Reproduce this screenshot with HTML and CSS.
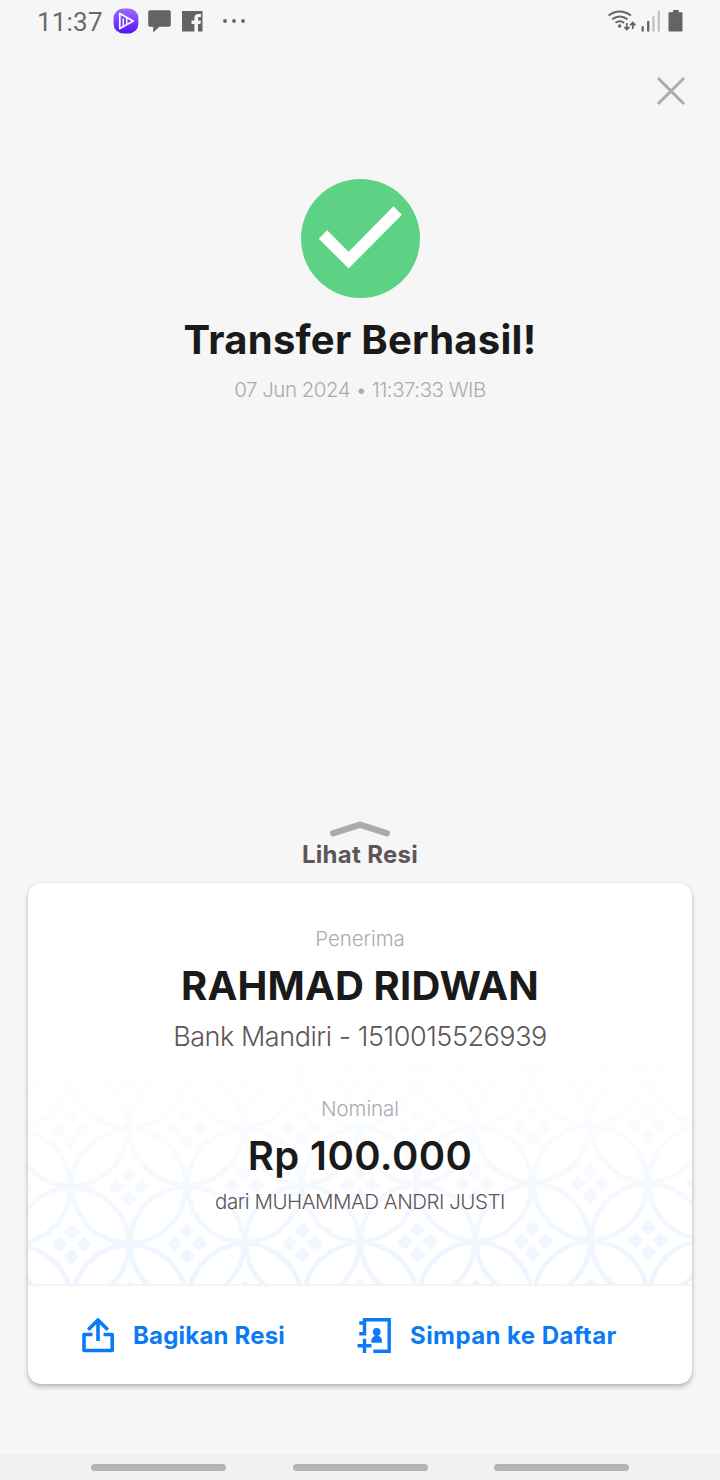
FILE: index.html
```
<!DOCTYPE html>
<html lang="id">
<head>
  <meta charset="UTF-8">
  <meta name="viewport" content="width=device-width, initial-scale=1.0">
  <title>Transfer Berhasil</title>
  <link rel="stylesheet" href="styles.css">
</head>
<body>
  <div class="status-bar">
    <span class="clock">11:37</span>
    <svg class="app-icon" width="26" height="26" viewBox="0 0 26 26">
      <defs>
        <linearGradient id="app-fill" x1="0" y1="0" x2="0" y2="1">
          <stop offset="0" stop-color="#9b6cff"/>
          <stop offset="1" stop-color="#5512fa"/>
        </linearGradient>
      </defs>
      <rect x="0.6" y="0.6" width="24.8" height="24.8" rx="9.5" fill="url(#app-fill)"/>
      <path d="M6.8 5.4v15.2L20.2 13z" fill="none" stroke="#fff" stroke-width="1.7" stroke-linejoin="round"/>
      <path d="M10.2 10.5v9M13.7 9.5v6.5" stroke="#fff" stroke-width="1.4"/>
    </svg>
    <svg class="chat-icon" width="23" height="23" viewBox="0 0 23 23">
      <path d="M2 0.3h19a1.8 1.8 0 0 1 1.8 1.8v12.8a1.8 1.8 0 0 1-1.8 1.8H11.4L5.2 22.4v-5.7H2A1.8 1.8 0 0 1 .2 14.9V2.1A1.8 1.8 0 0 1 2 .3z" fill="#646464"/>
    </svg>
    <svg class="fb-icon" width="21" height="21" viewBox="0 0 21 21">
      <path d="M0 0h20.5v20.5H16v-7.600h2.400l.5-3.400H16V7.600c0-1 .5-1.500 1.500-1.500h1.500V3h-2.500c-2.700 0-4.100 1.600-4.100 4.100v2.400H9.500v3.400h2.900v7.600H0z" fill="#646464"/>
    </svg>
    <svg class="more-icon" width="24" height="4" viewBox="0 0 24 4">
      <circle cx="2" cy="2" r="1.9" fill="#646464"/>
      <circle cx="11" cy="2" r="1.9" fill="#646464"/>
      <circle cx="20" cy="2" r="1.9" fill="#646464"/>
    </svg>
    <svg class="signal-icons" width="78" height="24" viewBox="0 0 78 24">
      <g fill="none" stroke="#646464" stroke-width="2">
        <path d="M0.5 6.5q11-8 22.500 0"/>
        <path d="M4.100 10.300q7.600-5.600 15.500 0"/>
        <path d="M7.500 13.800q4.200-3 8.600 0"/>
        <path d="M18.800 14v6M16.200 18l2.600 2.600L21.400 18M24.800 20v-6M22.200 16.300l2.600-2.700 2.600 2.700" stroke-width="1.700"/>
      </g>
      <circle cx="11.700" cy="17" r="1.700" fill="#646464"/>
      <path d="M34.700 18.200v3.500M40.200 13v8.700" stroke="#646464" stroke-width="2.300" stroke-linecap="round"/>
      <path d="M45.500 7.700v14M50.800 3v18.700" stroke="#c2c2c2" stroke-width="2.300" stroke-linecap="round"/>
      <path d="M61.500 3.200h3.500V1.600q0-.6.600-.6h4.600q.6 0 .6.600v1.600h3.100q.6 0 .6.600v18q0 .7-.7.700H61.200q-.7 0-.7-.7v-18q0-.6.700-.6z" fill="#646464"/>
    </svg>
  </div>

  <div class="top-bar">
    <svg class="close-icon" width="30" height="30" viewBox="0 0 30 30">
      <path d="M3 3l24 24M27 3L3 27" stroke="#afa8b0" stroke-width="3" stroke-linecap="square"/>
    </svg>
  </div>

  <div class="result">
    <svg class="check-icon" width="119" height="119" viewBox="0 0 119 119">
      <circle cx="59.5" cy="59.5" r="59.5" fill="#5ed284"/>
      <path d="M22 55.5l25.600 25.700L96.700 31.500" fill="none" stroke="#fff" stroke-width="11.800"/>
    </svg>
    <h1>Transfer Berhasil!</h1>
    <p class="date">07 Jun 2024 • 11:37:33 WIB</p>
  </div>

  <div class="see-receipt">
    <svg width="60" height="18" viewBox="0 0 60 18">
      <path d="M3.200 13.300L30 4.700l26.800 8.600" fill="none" stroke="#afa8b0" stroke-width="6.400" stroke-linecap="round" stroke-linejoin="round"/>
    </svg>
    <span>Lihat Resi</span>
  </div>

  <div class="card">
    <div class="details">
      <svg class="batik" width="664" height="240" viewBox="28 1045 664 240">
        <defs>
          <pattern id="kawung" width="115.300" height="115.300" patternUnits="userSpaceOnUse" patternTransform="translate(70.900 1130) rotate(-0.400)">
            <g fill="none" stroke="#e9f3ff" stroke-width="4.800">
              <circle cx="0" cy="0" r="56.700"/>
              <circle cx="115.300" cy="0" r="56.700"/>
              <circle cx="0" cy="115.300" r="56.700"/>
              <circle cx="115.300" cy="115.300" r="56.700"/>
              <circle cx="57.650" cy="57.650" r="56.700"/>
            </g>
            <g fill="#e9f3ff">
              <path id="petals" d="M57.650 37.600l7 7q1 1 0 2l-7 6.700-7-6.700q-1-1 0-2zM57.650 62.200l7 7q1 1 0 2l-7 6.700-7-6.700q-1-1 0-2zM45.300 49.900l7 7q1 1 0 2l-7 6.700-7-6.700q-1-1 0-2zM70 49.900l7 7q1 1 0 2l-7 6.700-7-6.700q-1-1 0-2z"/>
              <use href="#petals" x="-57.650" y="-57.650"/>
              <use href="#petals" x="57.650" y="-57.650"/>
              <use href="#petals" x="-57.650" y="57.650"/>
              <use href="#petals" x="57.650" y="57.650"/>
            </g>
          </pattern>
        </defs>
        <rect x="28" y="1045" width="664" height="240" fill="url(#kawung)"/>
      </svg>
      <p class="label">Penerima</p>
      <h2 class="name">RAHMAD RIDWAN</h2>
      <p class="account">Bank Mandiri - 1510015526939</p>
      <p class="label nominal">Nominal</p>
      <h2 class="amount">Rp 100.000</h2>
      <p class="sender">dari MUHAMMAD ANDRI JUSTI</p>
    </div>
    <div class="actions">
      <a class="share" href="#">
        <svg width="34" height="36" viewBox="0 0 34 36">
          <path d="M11.500 17.500H3V33.500H31.200V17.500H22.500M17 24V3.500M7.200 12.800L17 3l9.800 9.800" fill="none" stroke="#0a7bf5" stroke-width="3.600" stroke-linejoin="round"/>
        </svg>
        <span>Bagikan Resi</span>
      </a>
      <a class="save" href="#">
        <svg width="36" height="36" viewBox="0 0 36 36">
          <path d="M2.300 6H7.500M2.300 16.800H9.200M7.500 16.800V2.700H32.200V34.200H16.300M0.500 28.700H14.500M7.500 21.700V36" fill="none" stroke="#0a7bf5" stroke-width="3.400"/>
          <circle cx="19.700" cy="14.800" r="3.900" fill="#0a7bf5"/>
          <path d="M17.700 17h4v2q3.300 1.400 3.300 5v1.700H14.300V24q0-3.600 3.400-5z" fill="#0a7bf5"/>
        </svg>
        <span>Simpan ke Daftar</span>
      </a>
    </div>
  </div>

  <div class="nav-bar">
    <span></span>
    <span></span>
    <span></span>
  </div>
</body>
</html>
```
FILE: styles.css
```
* {
  box-sizing: border-box;
}
body {
  font-family: Inter, "Liberation Sans", sans-serif;
  margin: 0;
  height: 1480px;
  background-color: #f6f6f6;
  color: #1a1a1a;
  display: flex;
  flex-direction: column;
  overflow: hidden;
}
svg {
  display: block;
  flex: none;
}
h1, h2, p {
  margin: 0;
  white-space: nowrap;
}
.status-bar {
  height: 44px;
  display: flex;
  align-items: center;
  padding: 0 34px 2px 37px;
}
.clock {
  font-family: Roboto, sans-serif;
  font-size: 26px;
  width: 76px;
  padding-top: 2px;
  color: #6a6a6a;
  letter-spacing: 0.2px;
}
.chat-icon {
  margin-left: 9px;
}
.fb-icon {
  margin-left: 11px;
}
.more-icon {
  margin-left: 20px;
}
.signal-icons {
  margin-left: auto;
}
.top-bar {
  height: 135px;
  padding: 32px 34px 0 0;
  display: flex;
  justify-content: flex-end;
}
.result {
  height: 641px;
  display: flex;
  flex-direction: column;
  align-items: center;
}
.result h1 {
  margin-top: 17px;
  font-size: 40px;
  line-height: 50px;
  font-weight: 700;
  letter-spacing: 0.25px;
}
.date {
  margin-top: 11px;
  font-size: 20.5px;
  line-height: 28px;
  font-weight: 350;
  letter-spacing: -0.5px;
  color: #afa8b0;
}
.see-receipt {
  height: 63px;
  display: flex;
  flex-direction: column;
  align-items: center;
  font-size: 24px;
  line-height: 30px;
  font-weight: 700;
  letter-spacing: 0.3px;
  color: #5d5557;
}
.see-receipt span {
  margin-top: 2px;
}
.card {
  flex: none;
  width: 664px;
  height: 501px;
  margin: 0 auto;
  background: #fff;
  border-radius: 13px;
  box-shadow: 0 3px 5px rgba(0, 0, 0, 0.24), 0 0 2px rgba(0, 0, 0, 0.14);
}
.details {
  position: relative;
  height: 403px;
  padding-top: 42px;
  text-align: center;
  border-bottom: 2px solid #f3f4f5;
}
.batik {
  position: absolute;
  left: 0;
  bottom: 0;
  -webkit-mask-image: linear-gradient(transparent, rgba(0, 0, 0, 0.3) 40%, rgba(0, 0, 0, 0.85));
  mask-image: linear-gradient(transparent, rgba(0, 0, 0, 0.3) 40%, rgba(0, 0, 0, 0.85));
}
.details p, .details h2 {
  position: relative;
}
.label {
  font-size: 20.5px;
  line-height: 28px;
  font-weight: 350;
  letter-spacing: -0.1px;
  color: #afa8b0;
}
.name {
  margin-top: 8px;
  font-size: 40px;
  line-height: 50px;
  font-weight: 700;
  letter-spacing: 0.15px;
}
.account {
  margin-top: 8px;
  font-size: 27px;
  line-height: 36px;
  font-weight: 350;
  letter-spacing: -0.45px;
  color: #5d5557;
}
.nominal {
  margin-top: 40px;
}
.amount {
  margin-top: 8px;
  font-size: 40px;
  line-height: 50px;
  font-weight: 600;
  letter-spacing: 0.4px;
}
.sender {
  margin-top: 7px;
  font-size: 20.5px;
  line-height: 28px;
  font-weight: 350;
  letter-spacing: -0.48px;
  color: #5d5557;
}
.actions {
  height: 98px;
  display: flex;
  align-items: center;
  padding-left: 53px;
}
.actions a {
  display: flex;
  align-items: center;
  color: #0a7bf5;
  font-size: 24px;
  font-weight: 700;
  text-decoration: none;
  white-space: nowrap;
}
.share {
  width: 276px;
  letter-spacing: 0.2px;
}
.save {
  letter-spacing: 0.43px;
}
.actions span {
  margin-left: 18px;
}
.save span {
  margin-left: 17px;
}
.nav-bar {
  height: 26px;
  margin-top: auto;
  padding-left: 91px;
  background: #f1f1f1;
  display: flex;
  align-items: center;
  gap: 66.5px;
}
.nav-bar span {
  width: 135px;
  height: 7px;
  border-radius: 4px;
  background: #b5b5b5;
}
```
